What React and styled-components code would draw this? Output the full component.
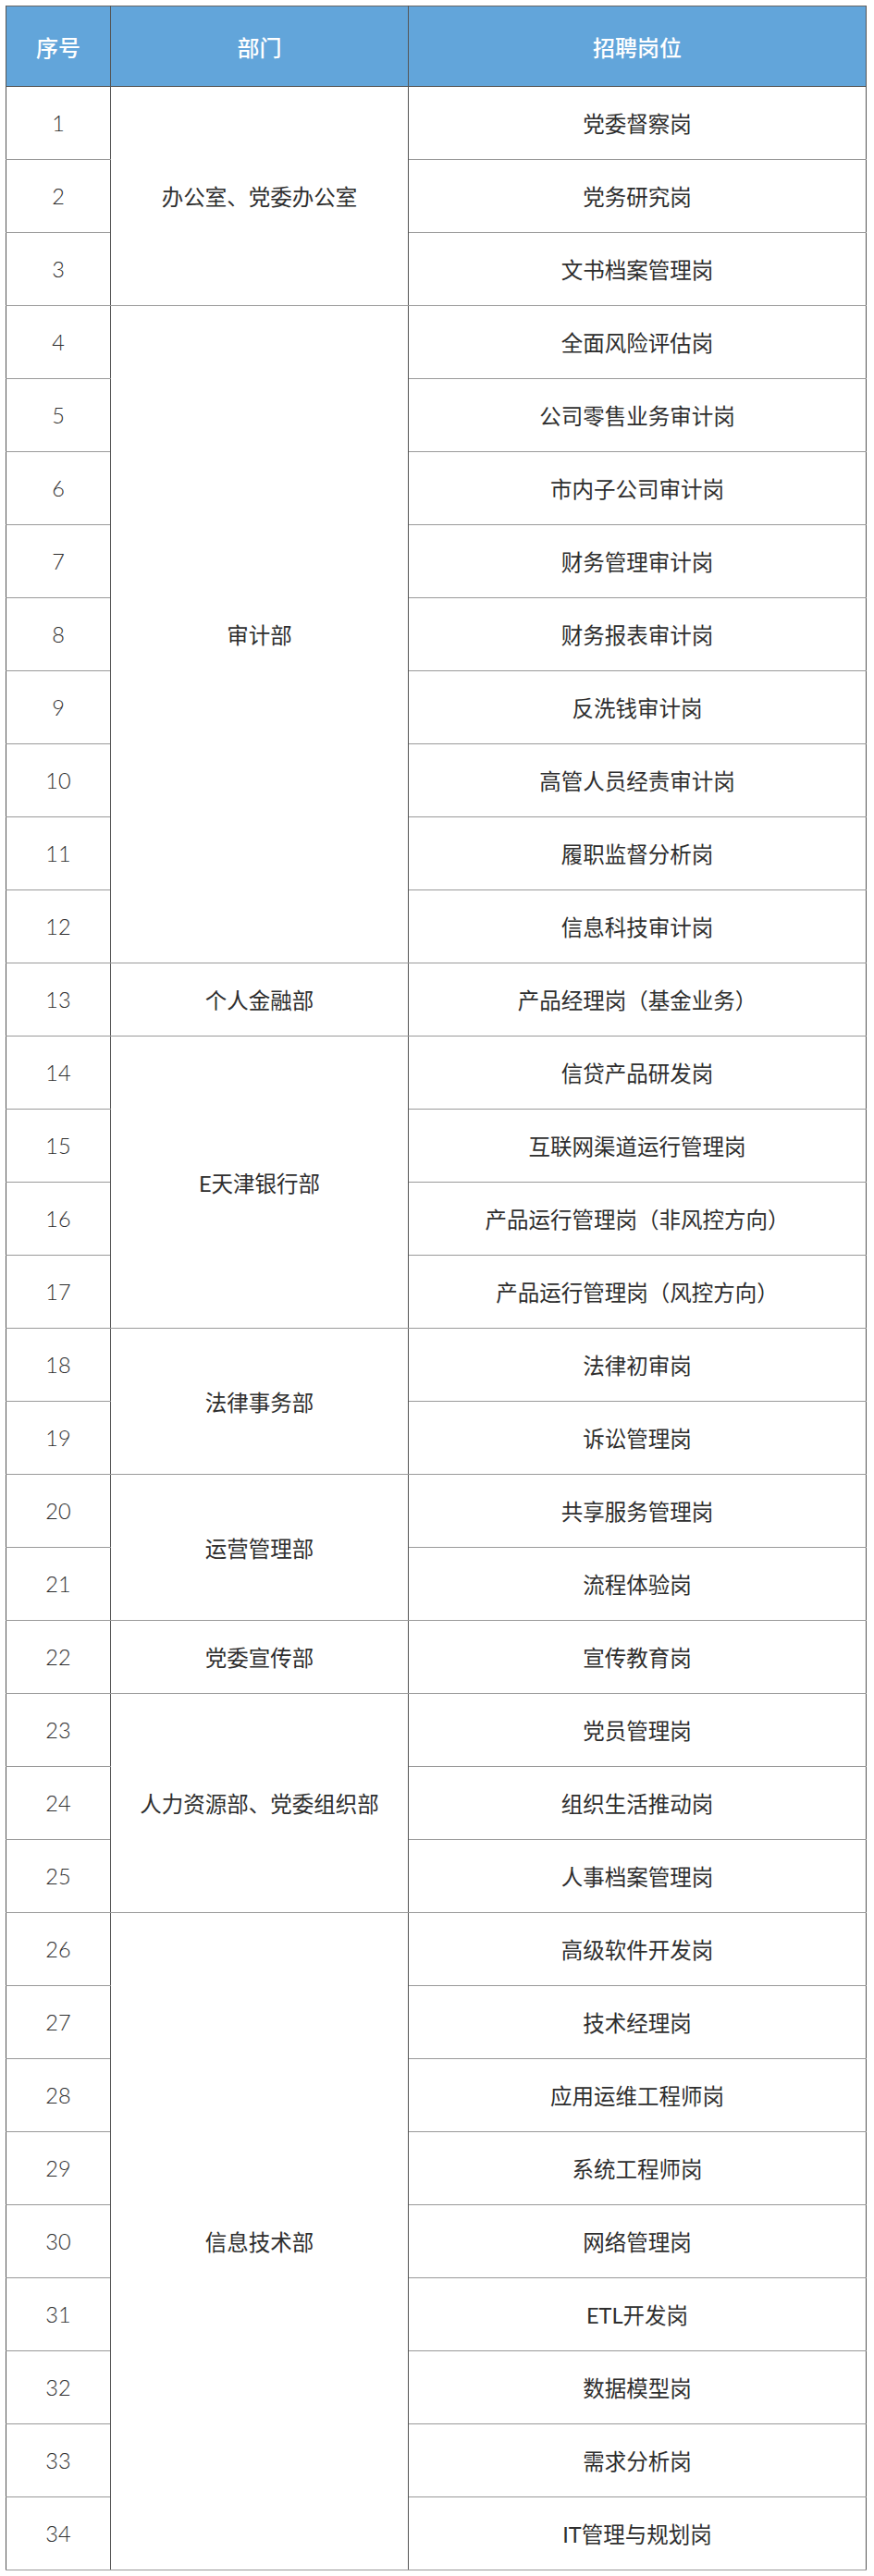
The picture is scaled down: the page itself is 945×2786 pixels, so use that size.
import React from "react";
import styled, { createGlobalStyle } from "styled-components";

const Global = createGlobalStyle`
  html, body { margin: 0; padding: 0; background: #fff; }
  body { font-family: Lato, "Noto Sans CJK SC", sans-serif; }
`;

const Page = styled.div`
  padding: 6px 9px 6px 6px;
`;

const Table = styled.table`
  width: 930px;
  border-collapse: collapse;
  table-layout: fixed;
  color: #333;
  font-family: Lato, "Noto Sans CJK SC", sans-serif;
  font-size: 23.5px;
  border: 1.5px solid #666;
`;

const HeadRow = styled.tr`
  height: 87px;
`;

const Row = styled.tr`
  height: 79px;
`;

const Head = styled.th`
  background: #62a5da;
  color: #fff;
  font-weight: 500;
  font-size: 24px;
  text-align: center;
  border-left: 1.5px solid #555;
  border-right: 1.5px solid #555;
  border-bottom: 1.5px solid #555;
  padding: 0;
`;

const Cell = styled.td`
  text-align: center;
  vertical-align: middle;
  padding: 0;
  border-left: 1.5px solid #555;
  border-right: 1.5px solid #555;
  border-top: 1.5px solid #999;
  border-bottom: 1.5px solid #999;
  font-weight: ${(p) => (p.$num ? 300 : 400)};
  color: #2e2e2e;
`;

const groups = [
  ["办公室、党委办公室", ["党委督察岗", "党务研究岗", "文书档案管理岗"]],
  ["审计部", ["全面风险评估岗", "公司零售业务审计岗", "市内子公司审计岗", "财务管理审计岗", "财务报表审计岗", "反洗钱审计岗", "高管人员经责审计岗", "履职监督分析岗", "信息科技审计岗"]],
  ["个人金融部", ["产品经理岗（基金业务）"]],
  ["E天津银行部", ["信贷产品研发岗", "互联网渠道运行管理岗", "产品运行管理岗（非风控方向）", "产品运行管理岗（风控方向）"]],
  ["法律事务部", ["法律初审岗", "诉讼管理岗"]],
  ["运营管理部", ["共享服务管理岗", "流程体验岗"]],
  ["党委宣传部", ["宣传教育岗"]],
  ["人力资源部、党委组织部", ["党员管理岗", "组织生活推动岗", "人事档案管理岗"]],
  ["信息技术部", ["高级软件开发岗", "技术经理岗", "应用运维工程师岗", "系统工程师岗", "网络管理岗", "ETL开发岗", "数据模型岗", "需求分析岗", "IT管理与规划岗"]],
];

export default function App() {
  let n = 0;
  const rows = [];
  groups.forEach(([dept, jobs]) => {
    jobs.forEach((job, i) => {
      n += 1;
      rows.push(
        <Row key={n}>
          <Cell $num>{n}</Cell>
          {i === 0 && <Cell rowSpan={jobs.length}>{dept}</Cell>}
          <Cell>{job}</Cell>
        </Row>
      );
    });
  });
  return (
    <>
      <Global />
      <Page>
        <Table>
          <colgroup>
            <col style={{ width: "113px" }} />
            <col style={{ width: "322px" }} />
            <col style={{ width: "495px" }} />
          </colgroup>
          <thead>
            <HeadRow>
              <Head>序号</Head>
              <Head>部门</Head>
              <Head>招聘岗位</Head>
            </HeadRow>
          </thead>
          <tbody>{rows}</tbody>
        </Table>
      </Page>
    </>
  );
}
